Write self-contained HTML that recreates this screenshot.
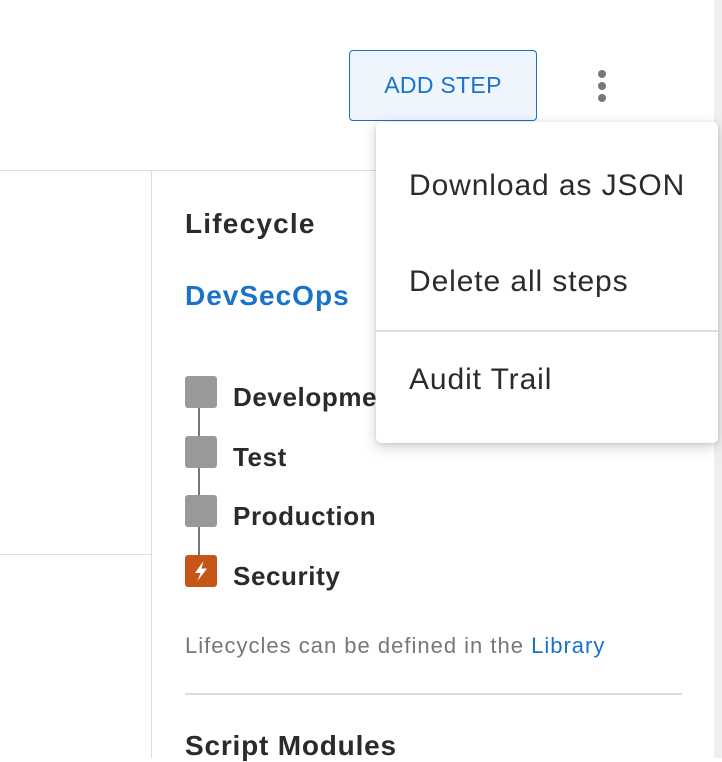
<!DOCTYPE html>
<html><head><style>
body{margin:0;width:722px;height:758px;background:#fff;position:relative;overflow:hidden;font-family:"Liberation Sans",Roboto,sans-serif;color:#2b2b2b}
.a{position:absolute;white-space:nowrap}
.b{font-size:26px;font-weight:bold;letter-spacing:0.6px}
</style></head><body>
<div class="a" style="left:714px;top:0;width:8px;height:758px;background:#efefef"></div>
<div class="a" style="left:0;top:170px;width:714px;height:1px;background:#ddd"></div>
<div class="a" style="left:151px;top:171px;width:1px;height:587px;background:#ddd"></div>
<div class="a" style="left:0;top:554px;width:151px;height:1px;background:#ddd"></div>
<div class="a" style="left:349px;top:50px;width:186px;height:69px;border:1.5px solid #1a73c8;border-radius:4px;background:#eff5fd;color:#1a73c8;font-size:23px;display:flex;align-items:center;justify-content:center;letter-spacing:0.3px">ADD STEP</div>
<div class="a" style="left:598px;top:70px;width:8px;height:8px;border-radius:50%;background:#777"></div>
<div class="a" style="left:598px;top:82px;width:8px;height:8px;border-radius:50%;background:#777"></div>
<div class="a" style="left:598px;top:94px;width:8px;height:8px;border-radius:50%;background:#777"></div>
<div class="a b" style="left:185px;top:208px;font-size:28px;letter-spacing:1.2px">Lifecycle</div>
<div class="a b" style="left:185px;top:280px;font-size:28px;letter-spacing:1px;color:#1a73c8">DevSecOps</div>
<div class="a" style="left:198px;top:395px;width:2px;height:180px;background:#777"></div>
<div class="a" style="left:185px;top:376px;width:32px;height:32px;border-radius:3px;background:#999"></div>
<div class="a" style="left:185px;top:436px;width:32px;height:32px;border-radius:3px;background:#999"></div>
<div class="a" style="left:185px;top:495px;width:32px;height:32px;border-radius:3px;background:#999"></div>
<div class="a" style="left:185px;top:555px;width:32px;height:32px;border-radius:3px;background:#c65518"></div>
<svg class="a" style="left:185px;top:555px" width="32" height="32"><path d="M18.5 6 L10 18 H15.5 L12.5 26 L22 13.5 H16.5 Z" fill="#fff"/></svg>
<div class="a b" style="left:233px;top:382px">Developme</div>
<div class="a b" style="left:233px;top:442px">Test</div>
<div class="a b" style="left:233px;top:501px">Production</div>
<div class="a b" style="left:233px;top:561px">Security</div>
<div class="a" style="left:185px;top:633px;font-size:22px;color:#777;letter-spacing:1px">Lifecycles can be defined in the <span style="color:#1a73c8">Library</span></div>
<div class="a" style="left:185px;top:693px;width:497px;height:2px;background:#ddd"></div>
<div class="a b" style="left:185px;top:730px;font-size:28px;letter-spacing:0.8px">Script Modules</div>
<div class="a" style="left:376px;top:122px;width:342px;height:321px;background:#fff;border-radius:5px;box-shadow:0 4px 14px rgba(0,0,0,.18),0 1px 4px rgba(0,0,0,.1)">
<div class="a" style="left:33px;top:47px;font-size:30px;letter-spacing:0.9px">Download as JSON</div>
<div class="a" style="left:33px;top:143px;font-size:30px;letter-spacing:0.9px">Delete all steps</div>
<div class="a" style="left:0;top:208px;width:342px;height:2px;background:#ddd"></div>
<div class="a" style="left:33px;top:241px;font-size:30px;letter-spacing:0.9px">Audit Trail</div>
</div>
</body></html>
